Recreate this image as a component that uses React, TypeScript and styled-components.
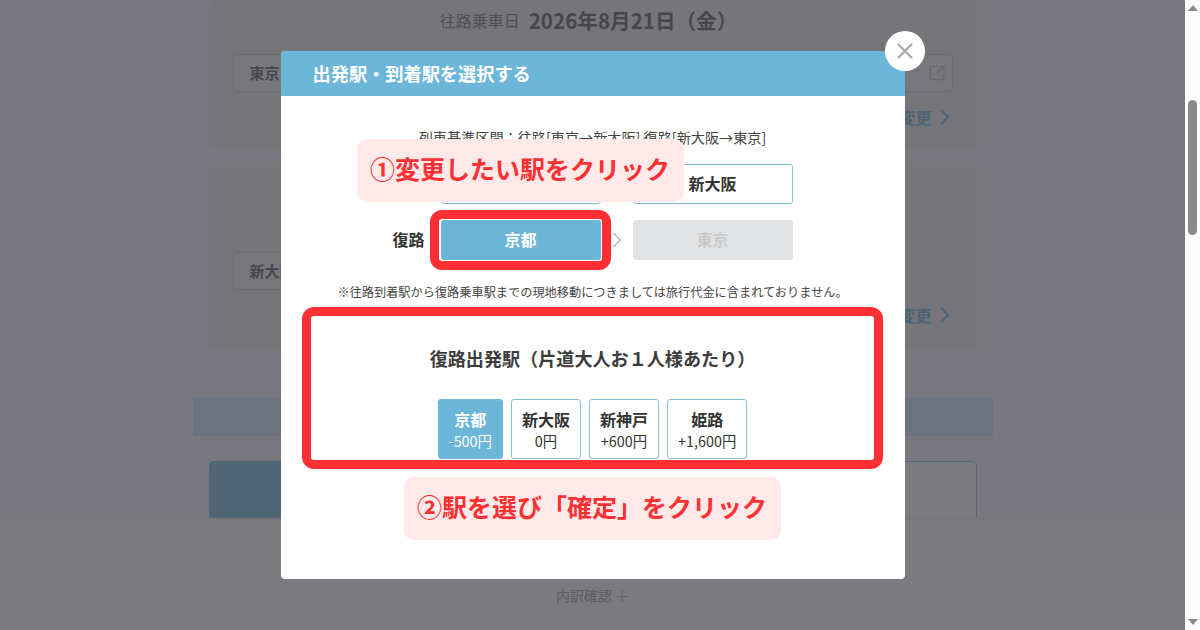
import { ChevronRight, SquareArrowOutUpRight, X } from 'lucide-react'
import styled, { createGlobalStyle } from 'styled-components'

const GlobalStyle = createGlobalStyle`
  html, body {
    margin: 0;
    padding: 0;
    overflow: hidden;
  }
  body {
    font-family: "Noto Sans CJK JP", "Noto Sans", sans-serif;
    color: #333;
  }
  * {
    box-sizing: border-box;
  }
`

type Tone = 'default' | 'selected' | 'disabled'

const returnStations = [
  { name: '京都', price: '-500円', selected: true },
  { name: '新大阪', price: '0円', selected: false },
  { name: '新神戸', price: '+600円', selected: false },
  { name: '姫路', price: '+1,600円', selected: false },
]

const App = () => {
  return (
    <Screen>
      <GlobalStyle />
      <Page>
        <Main>
          <Panel $top={7} $bottom={20}>
            <DateLine>
              <DateLabel>往路乗車日</DateLabel>
              <DateValue>2026年8月21日（金）</DateValue>
            </DateLine>
            <RouteInput>
              <span>東京</span>
              <SquareArrowOutUpRight size={18} strokeWidth={1.6} color="#aaa" />
            </RouteInput>
            <ChangeLink>
              変更
              <ChevronRight size={26} strokeWidth={1.7} />
            </ChangeLink>
          </Panel>
          <Panel $top={85} $bottom={23}>
            <RouteInput $width={400}>
              <span>新大阪</span>
            </RouteInput>
            <ChangeLink>
              変更
              <ChevronRight size={26} strokeWidth={1.7} />
            </ChangeLink>
          </Panel>
          <InfoBar />
          <PlanCard>
            <PlanTab />
          </PlanCard>
        </Main>
        <Footer>内訳確認 ＋</Footer>

        <Overlay>
          <Modal>
            <ModalHeader>出発駅・到着駅を選択する</ModalHeader>
            <CloseButton type="button" title="close">
              <X size={26} strokeWidth={2} color="#a9a9a9" />
            </CloseButton>

            <ModalBody>
              <RouteNote>
                列車基準区間：往路[東京→新大阪] 復路[新大阪→東京]
              </RouteNote>

              <StationGrid>
                <RowLabel>往路</RowLabel>
                <StationBox $tone="default">東京</StationBox>
                <RowArrow>
                  <ChevronRight size={26} strokeWidth={1.3} />
                </RowArrow>
                <StationBox $tone="default">新大阪</StationBox>

                <RowLabel>復路</RowLabel>
                <StationBox $tone="selected">京都</StationBox>
                <RowArrow>
                  <ChevronRight size={26} strokeWidth={1.3} />
                </RowArrow>
                <StationBox $tone="disabled">東京</StationBox>
              </StationGrid>

              <SmallNote>
                ※往路到着駅から復路乗車駅までの現地移動につきましては旅行代金に含まれておりません。
              </SmallNote>

              <SectionTitle>復路出発駅（片道大人お１人様あたり）</SectionTitle>
              <ChoiceRow>
                {returnStations.map((station) => (
                  <ChoiceButton
                    key={station.name}
                    type="button"
                    $selected={station.selected}
                  >
                    <ChoiceName>{station.name}</ChoiceName>
                    <ChoicePrice>{station.price}</ChoicePrice>
                  </ChoiceButton>
                ))}
              </ChoiceRow>
            </ModalBody>

            <Callout $left={76} $top={88} $width={327}>
              ①変更したい駅をクリック
            </Callout>
            <RedFrame $left={149} $top={159} $width={181} $height={60} />
            <RedFrame $left={21} $top={256} $width={581} $height={162} />
            <Callout $left={123} $top={426} $width={377}>
              ②駅を選び「確定」をクリック
            </Callout>
          </Modal>
        </Overlay>
      </Page>

      <Scrollbar>
        <ArrowUp />
        <Thumb />
        <ArrowDown />
      </Scrollbar>
    </Screen>
  )
}

const Screen = styled.div`
  display: flex;
  width: 1200px;
  height: 630px;
  overflow: hidden;
`

const Page = styled.div`
  position: relative;
  flex: 1;
  display: flex;
  flex-direction: column;
  background: #f6f7fa;
`

const Main = styled.main`
  height: 518px;
  overflow: hidden;
  display: flex;
  flex-direction: column;
  align-items: center;
`

const Panel = styled.section<{ $top: number; $bottom: number }>`
  width: 768px;
  padding: ${({ $top }) => $top}px 24px ${({ $bottom }) => $bottom}px;
  margin-bottom: 19px;
  background: #eeeaec;
  border-radius: 4px;
`

const DateLine = styled.div`
  height: 26px;
  margin-bottom: 21px;
  padding-right: 8px;
  display: flex;
  justify-content: center;
  align-items: center;
  gap: 9px;
`

const DateLabel = styled.span`
  font-size: 16px;
  color: #555;
`

const DateValue = styled.span`
  font-size: 20.6px;
  font-weight: 700;
`

const RouteInput = styled.div<{ $width?: number }>`
  width: ${({ $width }) => ($width ? `${$width}px` : '100%')};
  height: 38px;
  padding: 0 6px 0 16px;
  display: flex;
  align-items: center;
  justify-content: space-between;
  background: #f2f2f2;
  border: 1px solid #ccc;
  border-radius: 4px;
  font-size: 15px;
  font-weight: 700;

  span {
    padding-bottom: 2px;
  }
`

const ChangeLink = styled.a`
  height: 22px;
  margin: 14px -5px 0 0;
  padding-bottom: 1px;
  display: flex;
  justify-content: flex-end;
  align-items: center;
  color: #4a9fcc;
  font-size: 16px;
  font-weight: 700;
`

const InfoBar = styled.div`
  flex: none;
  width: 800px;
  height: 39px;
  margin-top: 29px;
  background: #cce4fa;
`

const PlanCard = styled.div`
  flex: none;
  width: 768px;
  height: 120px;
  margin-top: 25px;
  display: flex;
  background: #fff;
  border: 1px solid #5eb0d8;
  border-radius: 4px;
`

const PlanTab = styled.div`
  width: 200px;
  background: #5eb0d8;
`

const Footer = styled.footer`
  flex: 1;
  display: flex;
  justify-content: center;
  align-items: flex-end;
  padding-bottom: 25px;
  background: #fff;
  border-top: 1px solid #e4e4e4;
  font-size: 14px;
  line-height: 20px;
  color: #888;
`

const Overlay = styled.div`
  position: absolute;
  inset: 0;
  display: flex;
  justify-content: center;
  align-items: center;
  background: rgba(78, 78, 84, 0.75);
`

const Modal = styled.div`
  position: relative;
  width: 624px;
  height: 528px;
  background: #fff;
  border-radius: 4px;
`

const ModalHeader = styled.h2`
  height: 45px;
  margin: 0;
  padding: 0 0 2px 32px;
  display: flex;
  align-items: center;
  background: #6cb6da;
  border-radius: 4px 4px 0 0;
  color: #fff;
  font-size: 18.2px;
  font-weight: 700;
`

const CloseButton = styled.button`
  position: absolute;
  top: -20px;
  right: -20px;
  width: 40px;
  height: 40px;
  padding: 0;
  display: flex;
  justify-content: center;
  align-items: center;
  background: #fff;
  border: none;
  border-radius: 50%;
`

const ModalBody = styled.div`
  padding-top: 31px;
  display: flex;
  flex-direction: column;
  align-items: center;
`

const RouteNote = styled.p`
  margin: 0 0 17px;
  font-size: 14.15px;
  line-height: 20px;
  color: #444;
`

const StationGrid = styled.div`
  display: grid;
  grid-template-columns: 48px 160px 32px 160px;
  grid-auto-rows: 40px;
  row-gap: 16px;
  align-items: center;
`

const RowLabel = styled.span`
  padding-bottom: 2px;
  font-size: 16px;
  font-weight: 700;
`

const StationBox = styled.div<{ $tone: Tone }>`
  height: 40px;
  padding-bottom: 2px;
  display: flex;
  justify-content: center;
  align-items: center;
  font-size: 16px;
  font-weight: 700;
  border-radius: 3px;
  border: 1px solid
    ${({ $tone }) => ($tone === 'default' ? '#86bfd3' : 'transparent')};
  background: ${({ $tone }) =>
    $tone === 'selected'
      ? '#6cb6da'
      : $tone === 'disabled'
        ? '#e2e3e5'
        : '#fff'};
  color: ${({ $tone }) =>
    $tone === 'selected' ? '#fff' : $tone === 'disabled' ? '#c8c9cb' : '#333'};
`

const RowArrow = styled.span`
  display: flex;
  justify-content: center;
  color: #b5b5b5;
`

const SmallNote = styled.p`
  margin: 22px 0 0;
  font-size: 12.2px;
  line-height: 20px;
  color: #444;
`

const SectionTitle = styled.h3`
  margin: 44px 0 29px;
  font-size: 18.1px;
  line-height: 24px;
  font-weight: 700;
  color: #3c3c3c;
`

const ChoiceRow = styled.div`
  display: flex;
  gap: 8px;
`

const ChoiceButton = styled.button<{ $selected: boolean }>`
  height: 60px;
  padding: 0 10px 1px;
  display: flex;
  flex-direction: column;
  justify-content: center;
  align-items: center;
  font-family: inherit;
  background: ${({ $selected }) => ($selected ? '#6cb6da' : '#fff')};
  border: 1px solid ${({ $selected }) => ($selected ? '#6cb6da' : '#86bfd3')};
  border-radius: 3px;
  color: ${({ $selected }) => ($selected ? '#fff' : '#333')};
`

const ChoiceName = styled.span`
  font-size: 16px;
  line-height: 24px;
  font-weight: 700;
`

const ChoicePrice = styled.span`
  font-size: 14.4px;
  line-height: 20px;
`

const Callout = styled.div<{ $left: number; $top: number; $width: number }>`
  position: absolute;
  left: ${({ $left }) => $left}px;
  top: ${({ $top }) => $top}px;
  width: ${({ $width }) => $width}px;
  height: 63px;
  padding-bottom: 5px;
  display: flex;
  justify-content: center;
  align-items: center;
  background: #ffe9e9;
  border-radius: 10px;
  color: #ff3033;
  font-size: 25px;
  font-weight: 700;
  white-space: nowrap;
`

const RedFrame = styled.div<{
  $left: number
  $top: number
  $width: number
  $height: number
}>`
  position: absolute;
  left: ${({ $left }) => $left}px;
  top: ${({ $top }) => $top}px;
  width: ${({ $width }) => $width}px;
  height: ${({ $height }) => $height}px;
  border: 9px solid #ff3033;
  border-radius: 12px;
`

const Scrollbar = styled.div`
  flex: none;
  width: 15px;
  padding: 5px 0;
  display: flex;
  flex-direction: column;
  align-items: center;
  background: #fdfdfd;
`

const ArrowUp = styled.div`
  width: 0;
  height: 0;
  border-left: 5px solid transparent;
  border-right: 5px solid transparent;
  border-bottom: 6px solid #8a8a8a;
`

const ArrowDown = styled.div`
  width: 0;
  height: 0;
  margin-top: auto;
  border-left: 5px solid transparent;
  border-right: 5px solid transparent;
  border-top: 6px solid #8a8a8a;
`

const Thumb = styled.div`
  width: 9px;
  height: 135px;
  margin-top: 89px;
  background: #8a8a8a;
  border-radius: 5px;
`

export default App
